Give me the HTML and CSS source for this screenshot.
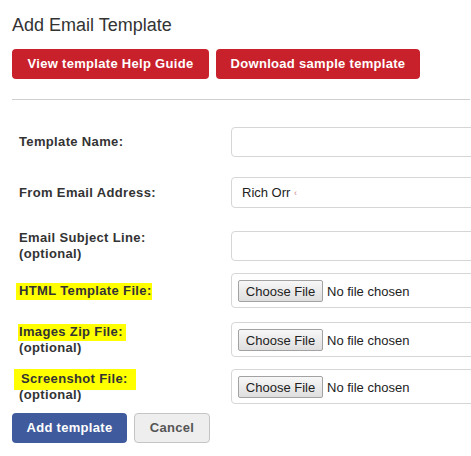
FILE: index.html
```html
<!DOCTYPE html>
<html>
<head>
<meta charset="utf-8">
<link rel="stylesheet" href="styles.css">
</head>
<body>
<div class="page">
  <h1 class="title">Add Email Template</h1>
  <div class="top-actions">
    <a class="btn btn-red btn-guide">View template Help Guide</a>
    <a class="btn btn-red btn-sample">Download sample template</a>
  </div>
  <hr class="divider">
  <form class="form">
    <div class="row r1">
      <label class="lbl">Template Name:</label>
      <div class="field text-field"></div>
    </div>
    <div class="row r2">
      <label class="lbl">From Email Address:</label>
      <div class="field text-field tall">Rich Orr <span class="caret">‹</span></div>
    </div>
    <div class="row r3">
      <label class="lbl">Email Subject Line:<br>(optional)</label>
      <div class="field text-field"></div>
    </div>
    <div class="row r4">
      <label class="lbl"><span class="hl hl-a">HTML Template File:</span></label>
      <div class="field file-field"><input type="file"></div>
    </div>
    <div class="row r5">
      <label class="lbl"><span class="hl hl-b">Images Zip File:</span><br>(optional)</label>
      <div class="field file-field"><input type="file"></div>
    </div>
    <div class="row r6">
      <label class="lbl"><span class="hl hl-c">Screenshot File:</span><br>(optional)</label>
      <div class="field file-field"><input type="file"></div>
    </div>
    <div class="bottom-actions">
      <button type="button" class="btn btn-blue">Add template</button>
      <button type="button" class="btn btn-cancel">Cancel</button>
    </div>
  </form>
</div>
</body>
</html>
```
FILE: styles.css
```css
html, body {
  margin: 0;
  padding: 0;
  background: #fff;
  overflow: hidden;
}
body {
  font-family: "Liberation Sans", Arial, sans-serif;
  color: #333;
}
.page {
  padding: 15px 0 0 12px;
  width: 600px;
}
.title {
  margin: 0;
  font-size: 18px;
  font-weight: normal;
  line-height: 20px;
  color: #333;
}
.top-actions {
  display: flex;
  gap: 7px;
  margin-top: 14px;
}
.btn {
  display: inline-block;
  box-sizing: border-box;
  height: 30px;
  line-height: 30px;
  border-radius: 4px;
  font-family: "Liberation Sans", Arial, sans-serif;
  font-size: 13px;
  font-weight: bold;
  letter-spacing: 0.3px;
  text-align: center;
  border: 0;
  padding: 0;
  cursor: pointer;
}
.btn-red {
  background: #c9212b;
  color: #fff;
}
.btn-guide { width: 197px; }
.btn-sample { width: 204px; }
.divider {
  margin: 20px 0 0 0;
  width: 458px;
  border: 0;
  border-top: 1px solid #cfcfcf;
  height: 0;
}
.form {
  margin-top: 27px;
}
.row {
  display: flex;
  align-items: center;
}
.r1 { margin-bottom: 20px; }
.r2 { margin-bottom: 22px; }
.r3 { margin-bottom: 11px; }
.r4 { margin-bottom: 14px; }
.r5 { margin-bottom: 12px; }
.r6 { margin-bottom: 9px; }
.lbl {
  width: 212px;
  padding-left: 7px;
  font-size: 13px;
  font-weight: bold;
  letter-spacing: 0.35px;
  line-height: 16px;
  color: #333;
}
.field {
  box-sizing: border-box;
  width: 300px;
  border: 1px solid #d6d6d6;
  border-radius: 4px;
  background: #fff;
}
.text-field {
  height: 30px;
  padding-left: 10px;
  font-size: 13px;
  line-height: 28px;
  color: #222;
}
.text-field.tall {
  height: 31px;
  line-height: 29px;
}
.caret {
  font-size: 9px;
  color: #c7868a;
  vertical-align: 1px;
}
.file-field {
  height: 35px;
  padding: 6px 6px 5px 6px;
}
.file-field input {
  font-family: "Liberation Sans", Arial, sans-serif;
  font-size: 13px;
  color: #222;
  height: 22px;
  line-height: 22px;
}
.file-field input::file-selector-button {
  font-family: "Liberation Sans", Arial, sans-serif;
  font-size: 13px;
  color: #222;
  height: 22px;
  width: 85px;
  padding: 0;
  margin-right: 4px;
  border: 1px solid #a2a2a2;
  border-radius: 2px;
  background: linear-gradient(#f7f7f7, #dedede);
}
.hl {
  background: #ffff00;
  display: inline-block;
}
.hl-a {
  margin: 0 0 -1px -3px;
  padding: 0 0 1px 3px;
}
.hl-b {
  margin: 0 0 -1px -1px;
  padding: 0 3px 1px 1px;
}
.hl-c {
  margin: -2px 0 -3px -5px;
  padding: 2px 8px 3px 7px;
}
.bottom-actions {
  display: flex;
  gap: 7px;
}
.btn-blue {
  background: #3f5b9d;
  color: #fff;
  width: 115px;
}
.btn-cancel {
  background: #eeeeee;
  color: #555;
  width: 76px;
  border: 1px solid #c4c4c4;
  line-height: 28px;
}
```
